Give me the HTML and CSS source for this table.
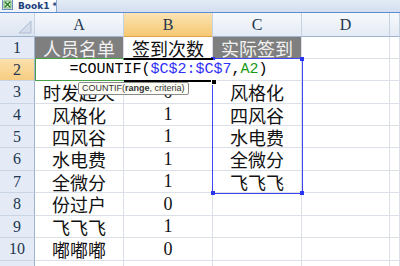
FILE: index.html
```html
<!DOCTYPE html>
<html>
<head>
<meta charset="utf-8">
<link rel="stylesheet" href="styles.css">
</head>
<body>
<div class="app">
  <div class="tabbar">
    <div class="tab">
      <svg class="xl" width="11" height="11" viewBox="0 0 11 11">
        <rect x="0.5" y="0.5" width="10" height="10" fill="#fff" stroke="#6a8fbf"/>
        <rect x="2" y="2" width="7" height="7" fill="#e8f2e0" stroke="#3b8a3b" stroke-width="0.8"/>
        <path d="M3 3 L8 8 M8 3 L3 8" stroke="#1f7a1f" stroke-width="1.4"/>
      </svg>
      <span class="tabname">Book1 *</span>
    </div>
  </div>
  <div class="sheet">
    <div class="grid">
      <div class="ch corner"><svg class="tri" width="14" height="14" viewBox="0 0 14 14"><path d="M13 1 L13 13 L1 13 Z" fill="#d3dceb" stroke="#aebdd1" stroke-width="1"/></svg></div>
      <div class="ch">A</div>
      <div class="ch hl">B</div>
      <div class="ch">C</div>
      <div class="ch">D</div>
      <div class="ch"></div>

      <div class="rh r22">1</div>
      <div class="c r22 dark">人员名单</div>
      <div class="c r22">签到次数</div>
      <div class="c r22 dark">实际签到</div>
      <div class="c r22"></div>
      <div class="c r22"></div>

      <div class="rh r22 hlr">2</div>
      <div class="c r22"></div>
      <div class="c r22"></div>
      <div class="c r22"></div>
      <div class="c r22"></div>
      <div class="c r22"></div>

      <div class="rh r23">3</div>
      <div class="c r23">时发起火</div>
      <div class="c r23 num">0</div>
      <div class="c r23">风格化</div>
      <div class="c r23"></div>
      <div class="c r23"></div>

      <div class="rh r22">4</div>
      <div class="c r22">风格化</div>
      <div class="c r22 num">1</div>
      <div class="c r22">四风谷</div>
      <div class="c r22"></div>
      <div class="c r22"></div>

      <div class="rh r22">5</div>
      <div class="c r22">四风谷</div>
      <div class="c r22 num">1</div>
      <div class="c r22">水电费</div>
      <div class="c r22"></div>
      <div class="c r22"></div>

      <div class="rh r23">6</div>
      <div class="c r23">水电费</div>
      <div class="c r23 num">1</div>
      <div class="c r23">全微分</div>
      <div class="c r23"></div>
      <div class="c r23"></div>

      <div class="rh r22">7</div>
      <div class="c r22">全微分</div>
      <div class="c r22 num">1</div>
      <div class="c r22">飞飞飞</div>
      <div class="c r22"></div>
      <div class="c r22"></div>

      <div class="rh r23">8</div>
      <div class="c r23">份过户</div>
      <div class="c r23 num">0</div>
      <div class="c r23"></div>
      <div class="c r23"></div>
      <div class="c r23"></div>

      <div class="rh r22">9</div>
      <div class="c r22">飞飞飞</div>
      <div class="c r22 num">1</div>
      <div class="c r22"></div>
      <div class="c r22"></div>
      <div class="c r22"></div>

      <div class="rh r23">10</div>
      <div class="c r23">嘟嘟嘟</div>
      <div class="c r23 num">0</div>
      <div class="c r23"></div>
      <div class="c r23"></div>
      <div class="c r23"></div>

      <div class="rh r23"></div>
      <div class="c r23"></div>
      <div class="c r23"></div>
      <div class="c r23"></div>
      <div class="c r23"></div>
      <div class="c r23"></div>
    </div>

    <div class="ref-green"></div>
    <div class="ref-blue"></div>
    <div class="handle h1"></div>
    <div class="handle h2"></div>
    <div class="handle h3"></div>
    <div class="handle h4"></div>
    <div class="editor">=COUNTIF(<span class="blue">$C$2:$C$7</span>,<span class="green">A2</span>)</div>
    <div class="active-top"></div>
    <div class="active-bottom"></div>
    <div class="fill"></div>
    <div class="tip">COUNTIF(<b>range</b>, criteria)</div>
  </div>
</div>
</body>
</html>
```
FILE: styles.css
```css
html, body {
  margin: 0;
  padding: 0;
  background: #fff;
}
.app {
  width: 400px;
  height: 266px;
  overflow: hidden;
  font-family: "Liberation Serif", "Noto Sans CJK SC", serif;
}
.tabbar {
  height: 12px;
  border-bottom: 1px solid #5b8bd0;
  background: linear-gradient(#e3ebf6, #d3def0);
  display: flex;
}
.tab {
  width: 57px;
  height: 12px;
  background: linear-gradient(#ffffff, #eef3fa);
  border-right: 1px solid #8ea9cf;
  display: flex;
  align-items: flex-end;
  gap: 5px;
  padding-left: 2px;
  box-sizing: border-box;
  overflow: hidden;
}
.xl {
  flex: none;
  margin-bottom: 2px;
}
.tabname {
  font-family: "DejaVu Sans", sans-serif;
  font-weight: bold;
  font-size: 9px;
  color: #1b3f7a;
  line-height: 11px;
  white-space: nowrap;
}
.sheet {
  position: relative;
}
.grid {
  display: grid;
  grid-template-columns: 35px 89px 89px 89px 88px 10px;
  grid-template-rows: 24px;
}
.ch {
  height: 24px;
  box-sizing: border-box;
  border-right: 1px solid #c5d2e3;
  border-bottom: 1px solid #9fb3cc;
  background: linear-gradient(#f7f9fc, #e4ebf5);
  display: flex;
  align-items: center;
  justify-content: center;
  font-size: 16px;
  color: #22364f;
}
.corner {
  position: relative;
  justify-content: flex-end;
  align-items: flex-end;
  background: linear-gradient(#eef2f8, #dde5f1);
}
.tri {
  margin: 0 2px 2px 0;
}
.ch.hl {
  background: linear-gradient(#fbe3b4, #f6c872);
  border-bottom-color: #e0a54b;
}
.rh {
  box-sizing: border-box;
  border-right: 1px solid #9fb3cc;
  border-bottom: 1px solid #c9d5e5;
  background: #e4ebf6;
  display: flex;
  align-items: center;
  justify-content: center;
  font-size: 16px;
  color: #22364f;
}
.rh.hlr {
  background: linear-gradient(#fbe0ab, #f6cd82);
}
.r22 { height: 22px; }
.r23 { height: 23px; }
.c {
  box-sizing: border-box;
  border-right: 1px solid #dadfe8;
  border-bottom: 1px solid #dadfe8;
  display: flex;
  align-items: center;
  justify-content: center;
  font-size: 18px;
  color: #111;
  white-space: nowrap;
  overflow: hidden;
}
.c.dark {
  background: #7f7f7f;
  color: #f2f2f2;
}
.c.num {
  font-size: 18px;
}
.ref-green {
  position: absolute;
  left: 35px;
  top: 45px;
  width: 89px;
  height: 23px;
  border: 1px solid #4aa04a;
  box-sizing: border-box;
}
.ref-blue {
  position: absolute;
  left: 212px;
  top: 45px;
  width: 91px;
  height: 136px;
  border: 1px solid #3c46f5;
  box-sizing: border-box;
}
.handle {
  position: absolute;
  width: 4px;
  height: 4px;
  background: #2a35f0;
}
.h1 { left: 211px; top: 44px; }
.h2 { left: 300px; top: 44px; }
.h3 { left: 211px; top: 178px; }
.h4 { left: 300px; top: 178px; }
.editor {
  position: absolute;
  left: 37px;
  top: 47px;
  width: 263px;
  height: 20px;
  background: #fff;
  font-family: "Liberation Mono", monospace;
  font-size: 15px;
  line-height: 20px;
  text-align: center;
  color: #000;
  white-space: nowrap;
}
.blue { color: #2f2ff5; }
.green { color: #169a16; }
.active-top, .active-bottom {
  position: absolute;
  left: 124px;
  width: 89px;
  height: 2px;
  background: #000;
}
.active-top { top: 45px; }
.active-bottom { top: 67px; }
.fill {
  position: absolute;
  left: 211px;
  top: 66px;
  width: 4px;
  height: 4px;
  background: #000;
  border: 1px solid #fff;
}
.tip {
  position: absolute;
  left: 78px;
  top: 69px;
  height: 13px;
  padding: 0 3px;
  box-sizing: border-box;
  border: 1px solid #8c8c8c;
  border-radius: 2px;
  background: #fdfdf6;
  font-family: "Liberation Sans", sans-serif;
  font-size: 9px;
  line-height: 11px;
  color: #333;
  white-space: nowrap;
}
```
